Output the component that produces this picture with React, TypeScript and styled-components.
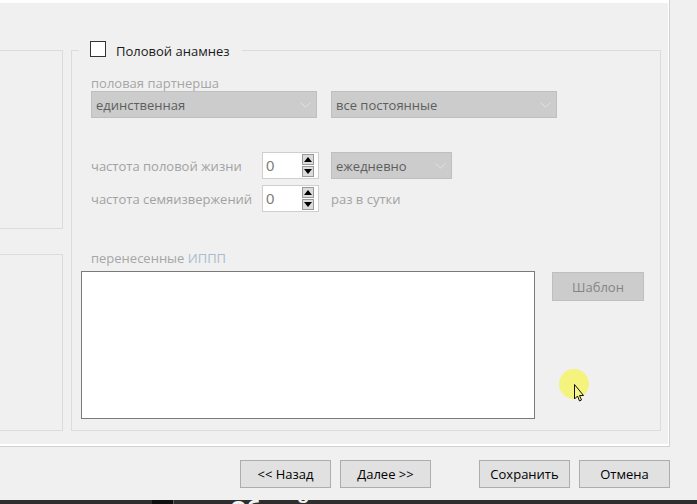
import React from "react";
import styled, { createGlobalStyle } from "styled-components";

const GlobalStyle = createGlobalStyle`
  html, body {
    margin: 0;
    padding: 0;
    background: #f0f0f0;
  }
  body {
    font-family: "Open Sans", "Noto Sans", sans-serif;
    font-size: 13px;
  }
  * {
    box-sizing: border-box;
  }
`;

const Window = styled.div`
  position: relative;
  width: 697px;
  height: 504px;
  overflow: hidden;
  background: #f0f0f0;
  display: flex;
  flex-direction: column;
`;

const Panel = styled.div`
  flex-shrink: 0;
  width: 670px;
  height: 447px;
  border-right: 1px solid #d2d2d2;
  border-bottom: 1px solid #d2d2d2;
`;

const PanelInner = styled.div`
  height: 100%;
  border-top: 3px solid #fff;
  border-right: 1px solid #fff;
  border-bottom: 2px solid #fff;
  display: flex;
  align-items: flex-start;
  padding-top: 47px;
`;

const LeftColumn = styled.div`
  width: 63px;
  display: flex;
  flex-direction: column;
  gap: 25px;
`;

const SideBox = styled.div<{ $h: number }>`
  height: ${(p) => p.$h}px;
  border: 1px solid #dcdcdc;
  border-left: none;
`;

const GroupBox = styled.div`
  margin-left: 8px;
  width: 590px;
  height: 381px;
  border: 1px solid #dcdcdc;
`;

const GroupHeader = styled.label`
  display: flex;
  align-items: center;
  width: fit-content;
  height: 16px;
  margin: -10px 0 0 7px;
  padding: 0 12px 0 11px;
  background: #f0f0f0;
  color: #1a1a1a;
`;

const CheckBox = styled.span`
  width: 16px;
  height: 16px;
  border: 1px solid #333;
  background: #fff;
`;

const HeaderText = styled.span`
  margin-left: 10px;
  padding-top: 3px;
  line-height: 16px;
`;

const GroupBody = styled.div`
  padding-left: 9px;
`;

const Form = styled.div`
  padding-left: 10px;
`;

const FieldLabel = styled.div<{ $mt?: number }>`
  margin-top: ${(p) => p.$mt ?? 0}px;
  line-height: 16px;
  color: #a6a6a6;
`;

const Accent = styled.span`
  color: #a9bccf;
`;

const Row = styled.div<{ $mt?: number; $gap?: number }>`
  display: flex;
  align-items: center;
  margin-top: ${(p) => p.$mt ?? 0}px;
  gap: ${(p) => p.$gap ?? 0}px;
`;

const Combo = styled.div<{ $w: number }>`
  width: ${(p) => p.$w}px;
  height: 27px;
  display: flex;
  align-items: center;
  justify-content: space-between;
  padding: 0 5px 0 4px;
  background: #cccccc;
  border: 1px solid #bfbfbf;
  color: #5e5e5e;
`;

const RowLabel = styled.span`
  width: 171px;
  color: #a2a2a2;
`;

const Spin = styled.div`
  width: 57px;
  height: 27px;
  display: flex;
  align-items: center;
  justify-content: space-between;
  padding: 0 4px 0 3px;
  background: #fff;
  border: 1px solid #cfcfcf;
  font-family: "Liberation Sans", sans-serif;
  font-size: 15px;
  color: #808080;
  margin-right: 12px;
`;

const SpinButtons = styled.div`
  display: flex;
  flex-direction: column;
  gap: 1px;
`;

const SpinButton = styled.div`
  width: 12px;
  height: 11px;
  display: flex;
  align-items: center;
  justify-content: center;
  background: #dcdcdc;
  border: 1px solid #9a9a9a;
`;

const PlainText = styled.span`
  color: #a2a2a2;
`;

const MemoRow = styled.div`
  display: flex;
  align-items: flex-start;
  margin-top: 5px;
`;

const Memo = styled.textarea`
  width: 454px;
  height: 148px;
  border: 1px solid #7a7a7a;
  background: #fff;
  resize: none;
  outline: none;
`;

const GrayButton = styled.div`
  margin: 1px 0 0 17px;
  width: 92px;
  height: 29px;
  display: flex;
  align-items: center;
  justify-content: center;
  background: #cccccc;
  border: 1px solid #bfbfbf;
  color: #858585;
`;

const Footer = styled.div`
  flex-shrink: 0;
  height: 53px;
  display: flex;
  align-items: flex-start;
  padding: 13px 0 0 240px;
`;

const Button = styled.div<{ $ml?: number }>`
  width: 91px;
  height: 28px;
  margin-left: ${(p) => p.$ml ?? 0}px;
  display: flex;
  align-items: center;
  justify-content: center;
  background: #e1e1e1;
  border: 1px solid #adadad;
  color: #000;
`;

const Taskbar = styled.div`
  flex-shrink: 0;
  height: 4px;
  overflow: hidden;
  display: flex;
  background: #2e2e2e;
`;

const TaskIcon = styled.div`
  margin-left: 152px;
  width: 22px;
  background: #0f0f0f;
  border-right: 1px solid #5a5a5a;
`;

const TaskTitle = styled.div`
  margin: -4px 0 0 56px;
  font-family: "Open Sans", sans-serif;
  font-weight: 700;
  font-size: 21px;
  line-height: 24px;
  color: #f2f2f2;
  white-space: nowrap;
`;

const CursorMark = styled.svg`
  position: absolute;
  left: 559px;
  top: 369px;
`;

const Chevron = () => (
  <svg width="11" height="6" viewBox="0 0 11 6">
    <polyline points="0.5,0.5 5.5,5 10.5,0.5" fill="none" stroke="#e2e2e2" strokeWidth="1" />
  </svg>
);

const Tri = ({ up }: { up?: boolean }) => (
  <svg width="8" height="5" viewBox="0 0 8 5">
    <polygon points={up ? "0,5 8,5 4,0" : "0,0 8,0 4,5"} fill="#000" />
  </svg>
);

const SpinBox = () => (
  <Spin>
    <span>0</span>
    <SpinButtons>
      <SpinButton>
        <Tri up />
      </SpinButton>
      <SpinButton>
        <Tri />
      </SpinButton>
    </SpinButtons>
  </Spin>
);

export default function App() {
  return (
    <>
      <GlobalStyle />
      <Window>
        <Panel>
          <PanelInner>
            <LeftColumn>
              <SideBox $h={179} />
              <SideBox $h={177} />
            </LeftColumn>
            <GroupBox>
              <GroupHeader>
                <CheckBox />
                <HeaderText>Половой анамнез</HeaderText>
              </GroupHeader>
              <GroupBody>
                <Form>
                  <FieldLabel $mt={18}>половая партнерша</FieldLabel>
                  <Row $gap={14}>
                    <Combo $w={226}>
                      <span>единственная</span>
                      <Chevron />
                    </Combo>
                    <Combo $w={226}>
                      <span>все постоянные</span>
                      <Chevron />
                    </Combo>
                  </Row>
                  <Row $mt={34}>
                    <RowLabel>частота половой жизни</RowLabel>
                    <SpinBox />
                    <Combo $w={121}>
                      <span>ежедневно</span>
                      <Chevron />
                    </Combo>
                  </Row>
                  <Row $mt={6}>
                    <RowLabel>частота семяизвержений</RowLabel>
                    <SpinBox />
                    <PlainText>раз в сутки</PlainText>
                  </Row>
                  <FieldLabel $mt={38}>
                    перенесенные <Accent>ИППП</Accent>
                  </FieldLabel>
                </Form>
                <MemoRow>
                  <Memo />
                  <GrayButton>Шаблон</GrayButton>
                </MemoRow>
              </GroupBody>
            </GroupBox>
          </PanelInner>
        </Panel>
        <Footer>
          <Button>&lt;&lt; Назад</Button>
          <Button $ml={9}>Далее &gt;&gt;</Button>
          <Button $ml={48}>Сохранить</Button>
          <Button $ml={9}>Отмена</Button>
        </Footer>
        <Taskbar>
          <TaskIcon />
          <TaskTitle>Общий список пациентов</TaskTitle>
        </Taskbar>
        <CursorMark width="32" height="36" viewBox="0 0 32 36">
          <circle cx="15" cy="15" r="15" fill="#f3f36a" opacity="0.85" />
          <path
            d="M15.5 15.5 L15.5 30 L18.5 27 L20.5 32 L22.5 31 L20.5 26.5 L24.5 26.5 Z"
            fill="#f5f58a"
            stroke="#111"
            strokeWidth="1"
            strokeLinejoin="miter"
          />
        </CursorMark>
      </Window>
    </>
  );
}
